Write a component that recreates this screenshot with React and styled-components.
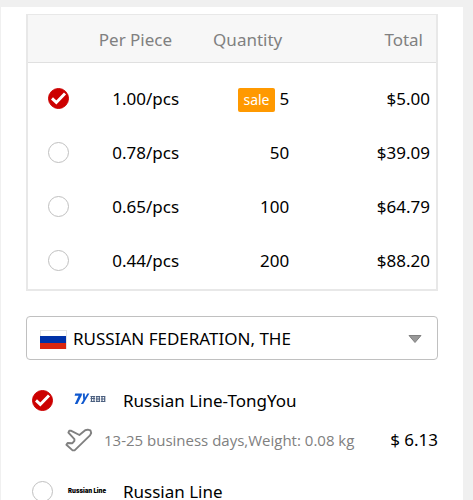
import React, { useState } from "react";
import styled, { createGlobalStyle } from "styled-components";

const PRICES = [
  { id: "p5", price: "1.00/pcs", quantity: 5, total: "$5.00", sale: true },
  { id: "p50", price: "0.78/pcs", quantity: 50, total: "$39.09" },
  { id: "p100", price: "0.65/pcs", quantity: 100, total: "$64.79" },
  { id: "p200", price: "0.44/pcs", quantity: 200, total: "$88.20" },
];

const Radio = ({ label, ...props }) => (
  <RadioLabel>
    <RadioInput type="radio" aria-label={label} {...props} />
    <Tick viewBox="0 0 21 21" aria-hidden="true">
      <path d="M4 10.400 8.300 14.400 17 5.400" fill="none" stroke="#fff" strokeWidth="2.900" />
    </Tick>
  </RadioLabel>
);

const RussianFlag = () => (
  <svg width="27" height="19" viewBox="0 0 27 19" aria-hidden="true">
    <rect x="0.5" y="0.5" width="26" height="18" fill="#fff" stroke="#e4e4e4" />
    <rect y="6" width="26" height="7" fill="#0032a8" />
    <rect y="13" width="26" height="6" fill="#da2610" />
  </svg>
);

const PlaneIcon = () => (
  <svg width="28" height="24" viewBox="0 0 28 24" aria-hidden="true">
    <path
      d="M14.400 7 6.300 2.800 4.200 2.800 3.400 4.600 9.400 11.200 9.400 12.800 7.400 15.200 2.600 15 1.400 16.800 7.600 22.400 9.600 22.400 25 7.400 26.200 5 25.400 2.400 22.800 1.600 20.200 2.200Z"
      fill="none"
      stroke="#808080"
      strokeWidth="1.900"
      strokeLinejoin="round"
    />
  </svg>
);

const TongYouLogo = () => (
  <svg width="40" height="14" viewBox="0 0 40 14" aria-hidden="true">
    <path
      d="M7.200 0.600h6.800l-.3 1.800L9.400 11H6.800l3.800-8.200H6.600zM14.800 0.600h2l.1 4.200 2.400-4.200h2.100L15.200 11h-2.300l2.400-4z"
      fill="#0f58cf"
    />
    <path
      d="M22.500 3.500h4.500M22.500 5.500h4.500M22.500 8.500h4.500M23.500 3v6M26 3v6M27.800 3.500h4.400M27.800 6h4.400M27.800 8.500h4.400M28.800 3v6M31.300 3v6M33 3.500h4.400M33 6h4.400M33 8.500h4.400M34 3v6M36.700 3v6"
      stroke="#4c6080"
      strokeWidth="1.200"
    />
  </svg>
);

const App = () => {
  const [selectedPrice, setSelectedPrice] = useState("p5");
  const [selectedLine, setSelectedLine] = useState("tongyou");

  return (
    <>
      <GlobalStyle />
      <Panel>
        <PriceTable>
          <colgroup>
            <col width="16%" />
            <col width="23%" />
            <col width="27%" />
            <col width="34%" />
          </colgroup>
          <thead>
            <tr>
              <HeadCell aria-label="Select" />
              <HeadCell>Per Piece</HeadCell>
              <HeadCell>Quantity</HeadCell>
              <HeadCell>Total</HeadCell>
            </tr>
          </thead>
          <tbody>
            {PRICES.map((item) => (
              <tr key={item.id}>
                <RadioCell>
                  <Radio
                    name="price"
                    label={`${item.quantity} pieces`}
                    checked={selectedPrice === item.id}
                    onChange={() => setSelectedPrice(item.id)}
                  />
                </RadioCell>
                <Cell>{item.price}</Cell>
                <Cell>
                  {item.sale && <SaleTag>sale</SaleTag>}
                  {item.quantity}
                </Cell>
                <Cell>{item.total}</Cell>
              </tr>
            ))}
          </tbody>
        </PriceTable>

        <CountryBox>
          <RussianFlag />
          <CountrySelect aria-label="Country" defaultValue="RU">
            <option value="RU">RUSSIAN FEDERATION, THE</option>
          </CountrySelect>
          <svg width="14" height="8" viewBox="0 0 14 8" aria-hidden="true">
            <path d="M1 0.500h12L7 7.500z" fill="#999" stroke="#808080" />
          </svg>
        </CountryBox>

        <LineList>
          <li>
            <LineRow>
              <Radio
                id="tongyou"
                name="line"
                label="Russian Line-TongYou"
                checked={selectedLine === "tongyou"}
                onChange={() => setSelectedLine("tongyou")}
              />
              <LogoSlot>
                <TongYouLogo />
              </LogoSlot>
              <LineName htmlFor="tongyou">Russian Line-TongYou</LineName>
            </LineRow>
            <LineDetail>
              <PlaneIcon />
              <Delivery>13-25 business days,Weight: 0.08 kg</Delivery>
              <span>$ 6.13</span>
            </LineDetail>
          </li>
          <li>
            <LineRow>
              <Radio
                id="russian-line"
                name="line"
                label="Russian Line"
                checked={selectedLine === "russian-line"}
                onChange={() => setSelectedLine("russian-line")}
              />
              <LogoSlot>Russian Line</LogoSlot>
              <LineName htmlFor="russian-line">Russian Line</LineName>
            </LineRow>
          </li>
        </LineList>
      </Panel>
    </>
  );
};

const GlobalStyle = createGlobalStyle`
  * {
    box-sizing: border-box;
  }

  html {
    overflow: hidden;
  }

  body {
    margin: 0;
    padding: 7px 10px 0 1px;
    background-color: #f0f0f0;
    color: #000;
    font-family: "Noto Sans", "Open Sans", sans-serif;
    font-size: 17px;
    line-height: 24px;
  }
`;

const Panel = styled.main`
  padding: 7px 25px 0;
  background-color: #fff;
`;

const PriceTable = styled.table`
  width: 100%;
  padding-bottom: 2px;
  border: 2px solid #e8e8e8;
  border-top-width: 1px;
  border-spacing: 0;
  table-layout: fixed;

  tbody::before {
    content: "";
    display: table-row;
    height: 8px;
  }
`;

const HeadCell = styled.th`
  height: 48px;
  padding: 2px 15px 0 0;
  border-bottom: 1px solid #e0e0e0;
  background-color: #f7f7f7;
  color: #808080;
  font-weight: 400;
  text-align: right;

  &:last-child {
    padding-right: 13px;
  }
`;

const Cell = styled.td`
  height: 54px;
  padding: 2px 8px 0 0;
  text-align: right;

  &:last-child {
    padding-right: 6px;
  }
`;

const RadioCell = styled(Cell)`
  padding: 0 0 0 20px;
  line-height: 0;
  text-align: left;
`;

const SaleTag = styled.span`
  display: inline-block;
  margin-right: 5px;
  padding: 0 5px;
  border-radius: 2px;
  background-color: #ff9900;
  color: #fff;
  font-size: 14px;
`;

const RadioLabel = styled.label`
  display: inline-grid;
  flex: none;
  vertical-align: top;
  cursor: pointer;
`;

const RadioInput = styled.input`
  grid-area: 1 / 1;
  width: 21px;
  height: 21px;
  margin: 0;
  border: 1px solid #c0c0c0;
  border-radius: 50%;
  background-color: #fff;
  appearance: none;

  &:checked {
    border-color: #cc0000;
    background-color: #cc0000;
  }
`;

const Tick = styled.svg`
  display: none;
  grid-area: 1 / 1;
  width: 21px;
  height: 21px;

  ${RadioInput}:checked + & {
    display: block;
  }
`;

const CountryBox = styled.div`
  display: flex;
  align-items: center;
  gap: 6px;
  height: 44px;
  margin-top: 25px;
  padding: 2px 15px 0 13px;
  border: 1px solid #c0c0c0;
  border-radius: 4px;
`;

const CountrySelect = styled.select`
  flex: 1;
  min-width: 0;
  padding: 0;
  border: 0;
  background: none;
  color: #000;
  font: inherit;
  appearance: none;
`;

const LineList = styled.ul`
  display: grid;
  gap: 26px;
  margin: 27px 0 0;
  padding: 0 0 0 6px;
  list-style: none;
`;

const LineRow = styled.div`
  display: flex;
  align-items: center;
`;

const LineName = styled.label`
  padding-top: 2px;
`;

const LogoSlot = styled.div`
  display: flex;
  width: 40px;
  margin: 0 15px 0 15px;
  font-family: Inter, sans-serif;
  font-size: 6px;
  font-weight: 900;
  line-height: 14px;
  white-space: nowrap;
`;

const LineDetail = styled.div`
  display: flex;
  align-items: center;
  gap: 11px;
  margin-top: 15px;
  padding-left: 33px;
`;

const Delivery = styled.span`
  flex: 1;
  color: #808080;
  font-family: "Open Sans", "Noto Sans", sans-serif;
  font-size: 15px;
`;

export default App;
